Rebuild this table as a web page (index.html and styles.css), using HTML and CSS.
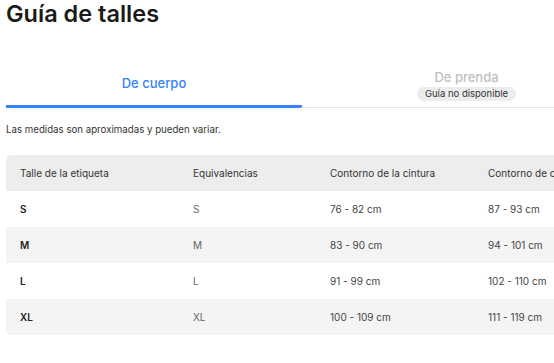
FILE: index.html
```html
<!DOCTYPE html>
<html lang="es">
<head>
<meta charset="utf-8">
<link rel="stylesheet" href="styles.css">
</head>
<body>
<div class="page">
  <h1 class="title">Guía de talles</h1>
  <div class="tabs">
    <div class="tab tab-active"><span class="tab-label">De cuerpo</span></div>
    <div class="tab tab-disabled">
      <span class="tab-label">De prenda</span>
      <span class="badge">Guía no disponible</span>
    </div>
  </div>
  <p class="note">Las medidas son aproximadas y pueden variar.</p>
  <table class="sizes">
    <thead>
      <tr><th class="c1">Talle de la etiqueta</th><th class="c2">Equivalencias</th><th class="c3">Contorno de la cintura</th><th class="c4">Contorno de cadera</th></tr>
    </thead>
    <tbody>
      <tr><td class="label">S</td><td class="eq">S</td><td>76 - 82 cm</td><td>87 - 93 cm</td></tr>
      <tr><td class="label">M</td><td class="eq">M</td><td>83 - 90 cm</td><td>94 - 101 cm</td></tr>
      <tr><td class="label">L</td><td class="eq">L</td><td>91 - 99 cm</td><td>102 - 110 cm</td></tr>
      <tr><td class="label">XL</td><td class="eq">XL</td><td>100 - 109 cm</td><td>111 - 119 cm</td></tr>
    </tbody>
  </table>
</div>
</body>
</html>
```
FILE: styles.css
```css
html, body { margin: 0; padding: 0; background: #fff; overflow: hidden; }
body { font-family: "Inter", "Noto Sans", sans-serif; color: #333; }
.page { padding: 0 0 0 6px; width: 760px; }
.title { margin: 0; font-size: 23.5px; font-weight: 600; line-height: 27px; color: #1a1a1a; }
.tabs { display: flex; margin-top: 39px; border-bottom: 1px solid #e5e5e5; height: 41px; }
.tab { display: flex; flex-direction: column; align-items: center; }
.tab-active { width: 296px; border-bottom: 3px solid #3483fa; border-radius: 0 2px 2px 0; margin-bottom: -1px; justify-content: center; padding-bottom: 6px; box-sizing: border-box; }
.tab-active .tab-label { color: #3483fa; font-size: 13px; font-weight: 500; }
.tab-disabled { width: 329px; padding-top: 3px; }
.tab-disabled .tab-label { color: #bfbfbf; font-size: 13px; font-weight: 500; line-height: 16px; }
.badge { margin-top: 2px; background: #ececec; color: #333; font-size: 9.5px; line-height: 14px; padding: 0 8px; border-radius: 7px; }
.note { margin: 16px 0 0; font-size: 9.7px; line-height: 12px; color: #333; }
.sizes { margin-top: 19px; border-collapse: separate; border-spacing: 0; font-size: 10px; }
.sizes th, .sizes td { text-align: left; padding: 0 0 0 14px; height: 36px; box-sizing: border-box; }
.sizes th { background: #ededed; font-weight: 400; color: #333; }
.sizes th:first-child { border-top-left-radius: 5px; }
.sizes tbody tr:nth-child(even) td { background: #f4f4f4; }
.sizes tbody tr:last-child td:first-child { border-bottom-left-radius: 5px; }
.c1 { width: 173px; }
.c2 { width: 137px; }
.c3 { width: 158px; }
.c4 { width: 200px; }
.sizes td { color: #444; }
.sizes td.label { font-weight: 600; color: #222; }
.sizes td.eq { color: #666; }
```
